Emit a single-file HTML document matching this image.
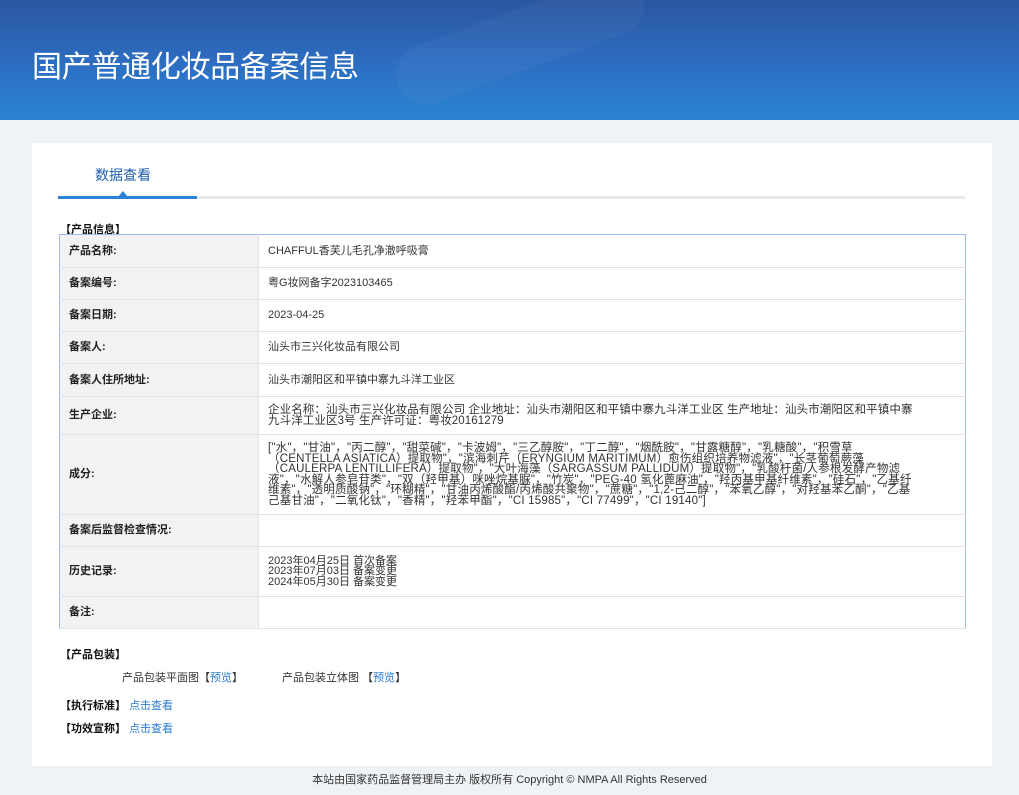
<!DOCTYPE html>
<html><head><meta charset="utf-8"><style>
*{margin:0;padding:0;box-sizing:border-box}
body{width:1019px;height:795px;background:#f0f3f6;font-family:"Liberation Sans","Noto Sans CJK SC",sans-serif;color:#333;font-size:11px;position:relative;overflow:hidden}
.hd{position:absolute;left:0;top:0;width:1019px;height:120px;background:linear-gradient(180deg,#2a56a0 0%,#2d6cc0 50%,#2a84d2 100%);overflow:hidden}
.hd .b1{position:absolute;left:390px;top:10px;width:260px;height:60px;border-radius:30px;background:rgba(255,255,255,.035);transform:rotate(-20deg)}
.hd .b2{position:absolute;left:130px;top:150px;width:160px;height:80px;background:rgba(90,130,230,.35);transform:skewY(20deg)}
.hd .b3{position:absolute;left:560px;top:175px;width:150px;height:60px;border-radius:30px;background:rgba(255,255,255,.04);transform:rotate(-20deg)}
.hd h1{position:absolute;left:32px;top:42px;font-size:30px;font-weight:normal;color:#fff;letter-spacing:-0.3px}
.card{position:absolute;left:32px;top:143px;width:960px;height:623px;background:#fff}
.tab{position:absolute;left:63px;top:22px;font-size:14px;color:#1f5fae}
.tl{position:absolute;left:26px;top:53px;width:907px;height:3px;background:#e8e8e8}
.tl i{position:absolute;left:0;top:0;width:139px;height:3px;background:#2a82d4}
.tri{position:absolute;left:86px;top:48px;width:0;height:0;border-left:5px solid transparent;border-right:5px solid transparent;border-bottom:6px solid #2a82d4}
.st{position:absolute;left:28px;font-size:11px;font-weight:bold;color:#111}
table{position:absolute;left:27px;top:91px;width:907px;border-collapse:collapse;border:1px solid #9dbcef}
td{border-bottom:1px solid #e3e3e3;font-size:11px;vertical-align:middle;line-height:10.5px}
td.l{width:199px;background:#f2f2f2;font-weight:bold;padding-left:9px;color:#222;border-right:1px solid #e3e3e3}
td.v{padding:0 45px 0 9px;color:#333}
td.w{font-size:11.5px;letter-spacing:0.1px}
td.w2{font-size:11.5px;letter-spacing:0.2px;padding-right:50px}
a{color:#2b7bd6;text-decoration:none}
.ft{position:absolute;left:0;top:771px;width:1019px;text-align:center;font-size:11px;color:#333}
</style></head><body>
<div class="hd"><div class="b1"></div><div class="b2"></div><div class="b3"></div><h1>国产普通化妆品备案信息</h1></div>
<div class="card">
<div class="tab">数据查看</div>
<div class="tl"><i></i></div><div class="tri"></div>
<div class="st" style="top:78px">【产品信息】</div>
<table>
<tr style="height:33px"><td class="l">产品名称:</td><td class="v">CHAFFUL香芙儿毛孔净澈呼吸膏</td></tr>
<tr style="height:32px"><td class="l">备案编号:</td><td class="v">粤G妆网备字2023103465</td></tr>
<tr style="height:32px"><td class="l">备案日期:</td><td class="v">2023-04-25</td></tr>
<tr style="height:32px"><td class="l">备案人:</td><td class="v">汕头市三兴化妆品有限公司</td></tr>
<tr style="height:33px"><td class="l">备案人住所地址:</td><td class="v">汕头市潮阳区和平镇中寨九斗洋工业区</td></tr>
<tr style="height:38px"><td class="l">生产企业:</td><td class="v w">企业名称：汕头市三兴化妆品有限公司 企业地址：汕头市潮阳区和平镇中寨九斗洋工业区 生产地址：汕头市潮阳区和平镇中寨九斗洋工业区3号 生产许可证：粤妆20161279</td></tr>
<tr style="height:80px"><td class="l">成分:</td><td class="v w2">["水"，"甘油"，"丙二醇"，"甜菜碱"，"卡波姆"，"三乙醇胺"，"丁二醇"，"烟酰胺"，"甘露糖醇"，"乳糖酸"，"积雪草（CENTELLA ASIATICA）提取物"，"滨海刺芹（ERYNGIUM MARITIMUM）愈伤组织培养物滤液"，"长茎葡萄蕨藻（CAULERPA LENTILLIFERA）提取物"，"大叶海藻（SARGASSUM PALLIDUM）提取物"，"乳酸杆菌/人参根发酵产物滤液"，"水解人参皂苷类"，"双（羟甲基）咪唑烷基脲"，"竹炭"，"PEG-40 氢化蓖麻油"，"羟丙基甲基纤维素"，"硅石"，"乙基纤维素"，"透明质酸钠"，"环糊精"，"甘油丙烯酸酯/丙烯酸共聚物"，"蔗糖"，"1,2-己二醇"，"苯氧乙醇"，"对羟基苯乙酮"，"乙基己基甘油"，"二氧化钛"，"香精"，"羟苯甲酯"，"CI 15985"，"CI 77499"，"CI 19140"]</td></tr>
<tr style="height:32px"><td class="l">备案后监督检查情况:</td><td class="v"></td></tr>
<tr style="height:50px"><td class="l">历史记录:</td><td class="v">2023年04月25日 首次备案<br>2023年07月03日 备案变更<br>2024年05月30日 备案变更</td></tr>
<tr style="height:32px"><td class="l">备注:</td><td class="v"></td></tr>
</table>
<div class="st" style="top:503px">【产品包装】</div>
<div style="position:absolute;left:90px;top:526px;font-size:11px">产品包装平面图【<a>预览</a>】</div>
<div style="position:absolute;left:250px;top:526px;font-size:11px">产品包装立体图 【<a>预览</a>】</div>
<div class="st" style="top:554px">【执行标准】 <a style="font-weight:normal">点击查看</a></div>
<div class="st" style="top:577px">【功效宣称】 <a style="font-weight:normal">点击查看</a></div>
</div>
<div class="ft">本站由国家药品监督管理局主办 版权所有 Copyright © NMPA All Rights Reserved</div>
</body></html>
